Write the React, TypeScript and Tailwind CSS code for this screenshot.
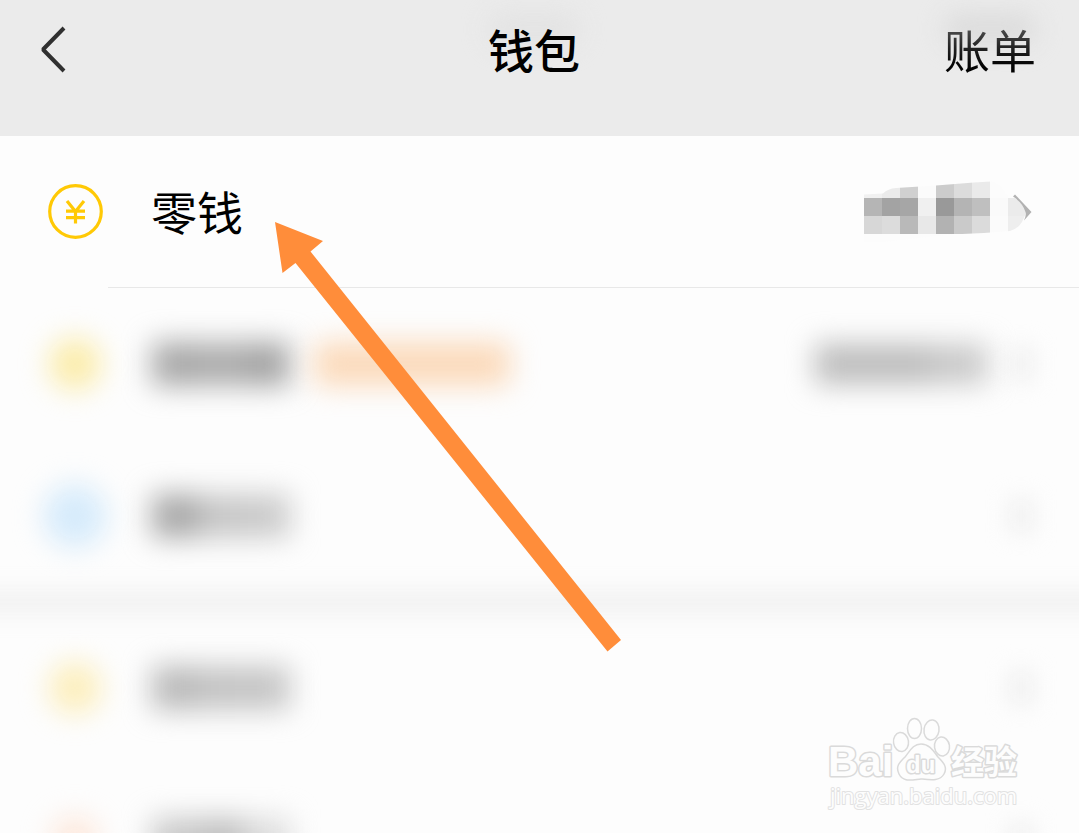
import clsx from 'clsx'

const cjk = 'font-["Noto_Sans_CJK_SC",sans-serif]'

function BackIcon(props: React.ComponentPropsWithoutRef<'svg'>) {
  return (
    <svg aria-hidden="true" viewBox="0 0 40 52" fill="none" {...props}>
      <path d="M32 6 11 27.500l21 21.500" stroke="#303030" strokeWidth="4" strokeLinejoin="bevel" />
    </svg>
  )
}

function CoinIcon(props: React.ComponentPropsWithoutRef<'svg'>) {
  return (
    <svg aria-hidden="true" viewBox="0 0 56 60" fill="none" stroke="#ffc905" {...props}>
      <circle cx="27.5" cy="31.5" r="25.8" strokeWidth="3.2" />
      <path d="m19 21 8.500 10.500 8.500-10.500M27.500 31v12.500M18 31.200h19M18 37.700h19" strokeWidth="3.2" />
    </svg>
  )
}

// 18px mosaic cells, one array per row
const mosaic = [
  ['#f1f1f1', '#ebebeb', '#d0d0d0', '#fbfbfb', '#cccccc', '#dcdcdc', '#eaeaea', '#fcfcfc', '#fdfdfd'],
  ['#b5b5b5', '#a3a3a3', '#a6a6a6', '#f0f0f0', '#999999', '#b4b4b4', '#bfbfbf', '#fafafa', '#ebebeb'],
  ['#d7d7d7', '#dcdcdc', '#b9b9b9', '#e8e8e8', '#b2b2b2', '#cacaca', '#dbdbdb', '#fbfbfb', '#eeeeee'],
]

function HiddenBalance(props: React.ComponentPropsWithoutRef<'svg'>) {
  return (
    <svg role="img" aria-label="hidden" viewBox="0 2 168 64" {...props}>
      <clipPath id="smudge">
        <path d="M0 18.5 19 17.5Q24 12.500 32 12L72 9.500 110 6.500 127 5.500Q138 8 142 18L151 22Q161 28 162 36 158 52 146 55L120 57 98 58H0z" />
      </clipPath>
      <path d="M0 58h90L20 66H0z" fill="#fcfcfc" />
      <g clipPath="url(#smudge)" shapeRendering="crispEdges">
        {mosaic.map((row, y) =>
          row.map((fill, x) => (
            <rect key={`${x}-${y}`} x={x * 18} y={4 + y * 18} width="18" height="18" fill={fill} />
          )),
        )}
      </g>
      <path d="M149 20.500 151 18.500 167.500 36 160 44.500Q162.500 39 161.500 36 159 27 149 20.500z" fill="#b2b2b2" />
    </svg>
  )
}

function Arrow(props: React.ComponentPropsWithoutRef<'svg'>) {
  return (
    <svg aria-hidden="true" viewBox="0 0 348 430" {...props}>
      <path d="M0 0 48 19 35.500 29.500 346 418 332.500 429.500 20.500 41 7.500 51z" fill="#ff8d3a" />
    </svg>
  )
}

function Watermark(props: React.ComponentPropsWithoutRef<'svg'>) {
  return (
    <svg viewBox="0 0 200 100" fill="#fdfdfd" stroke="#dadada" strokeWidth="2" strokeLinejoin="round" {...props}>
      <g paintOrder="stroke">
        <text x="2" y="63" fontSize="42" strokeWidth="3" className='font-["Liberation_Sans",sans-serif] font-bold'>
          Bai
        </text>
        <text x="125" y="61" fontSize="33" strokeWidth="3" className='font-["Noto_Sans_CJK_SC",sans-serif] font-bold'>
          经验
        </text>
        <text x="4" y="91" fontSize="22" stroke="#e2e2e2" className='font-["Open_Sans",sans-serif]'>
          jingyan.baidu.com
        </text>
      </g>
      <g strokeWidth="1.5">
        <ellipse cx="75" cy="29" rx="7.500" ry="9.500" transform="rotate(-8 75 29)" />
        <ellipse cx="88.500" cy="15.500" rx="7" ry="10" />
        <ellipse cx="105.500" cy="17" rx="7.500" ry="10" transform="rotate(8 105.500 17)" />
        <ellipse cx="116" cy="33.500" rx="7.500" ry="9.500" transform="rotate(-8 116 33.500)" />
        <path d="M95 31C104 31 108 39 112 44 117 49 122 54 118 61 114 68 106 67 95 66 84 67 77 69 73 61 69 53 74 49 79 44 84 38 87 31 95 31z" />
      </g>
      <text x="80" y="60" fontSize="24" paintOrder="stroke" strokeWidth="3" className='font-["Liberation_Sans",sans-serif] font-bold'>
        du
      </text>
    </svg>
  )
}

type Row = { icon: string; label: string[]; tag?: boolean; value?: boolean }

const accounts: Row[] = [
  { icon: 'size-13 bg-[#fbecaa]', label: ['bg-[#a8a8a8]', 'bg-[#adadad]', 'bg-[#a4a4a4]'], tag: true, value: true },
  { icon: 'size-16 bg-[#d6ebfb]', label: ['bg-[#a8a8a8]', 'bg-[#c6c6c6]', 'bg-[#cacaca]'] },
]

const services: Row[] = [
  { icon: 'size-13 bg-[#fceebc]', label: ['bg-[#bababa]', 'bg-[#c3c3c3]', 'bg-[#c5c5c5]'] },
  { icon: 'size-12 bg-[#fde8dc]', label: ['bg-[#c8c8c8]', 'bg-[#bebebe]', 'bg-[#dcdcdc]'] },
]

function BlurredRow({ icon, label, tag, value }: Row) {
  return (
    <li aria-hidden="true" className="flex h-[152px] items-center pr-12 pl-12">
      <div className="flex w-[54px] shrink-0 justify-center">
        <div className={clsx('shrink-0 rounded-full blur-[14px]', icon)} />
      </div>
      <div className="ml-[50px] flex blur-[14px]">
        {label.map((shade, i) => (
          <div key={i} className={clsx('h-11 w-[46px]', shade)} />
        ))}
      </div>
      {tag && <div className="ml-6 h-11 w-[196px] rounded-lg bg-[#fbdabb] blur-[14px]" />}
      <div className="ml-auto flex items-center gap-6">
        {value && (
          <div className="flex blur-[14px]">
            <div className="h-10 w-[116px] bg-[#bcbcbc]" />
            <div className="h-10 w-14 bg-[#c8c8c8]" />
          </div>
        )}
        <div className="h-8 w-5 bg-[#ececec] blur-[12px]" />
      </div>
    </li>
  )
}

export default function App() {
  return (
    <div className={clsx('relative h-screen overflow-hidden bg-[#fdfdfd] text-[46px] leading-none text-black', cjk)}>
      <header className="grid h-[136px] grid-cols-3 items-center bg-[#ebebeb] pr-[43px] pb-10 pl-8">
        <button type="button" aria-label="返回" className="justify-self-start">
          <BackIcon className="h-[52px] w-10" />
        </button>
        <h1 className="relative justify-self-center font-medium">
          <span className="absolute -top-3 left-0 h-8 w-full rounded-full bg-[#e3e3e3] blur-md" />
          <span className="relative">钱包</span>
        </h1>
        <a href="#bills" className="relative justify-self-end">
          <span className="absolute -top-3 left-0 h-8 w-full rounded-full bg-[#dcdcdc] blur-md" />
          <span className="relative bg-gradient-to-b from-[#707070] via-[#222222] to-black bg-clip-text text-transparent">
            账单
          </span>
        </a>
      </header>

      <main>
        <a href="#balance" className="flex h-[152px] items-center pr-[47px] pb-1 pl-12">
          <CoinIcon className="h-[60px] w-14 shrink-0" />
          <span className="ml-[47px]">零钱</span>
          <HiddenBalance className="ml-auto h-16 w-[168px]" />
        </a>
        <ul className="relative">
          <li aria-hidden="true" className="absolute -top-px right-0 left-[108px] h-px bg-[#e8e8e8]" />
          {accounts.map((row, i) => (
            <BlurredRow key={i} {...row} />
          ))}
        </ul>
        <div className="-mx-10 h-5 bg-[#efefef] blur-[12px]" />
        <ul>
          {services.map((row, i) => (
            <BlurredRow key={i} {...row} />
          ))}
        </ul>
      </main>

      {/* Pointer to the balance row */}
      <Arrow className="absolute top-[222px] left-[275px] h-[430px] w-[348px]" />
      <Watermark className="absolute right-[53px] bottom-[20px] h-[100px] w-[200px]" />
    </div>
  )
}
